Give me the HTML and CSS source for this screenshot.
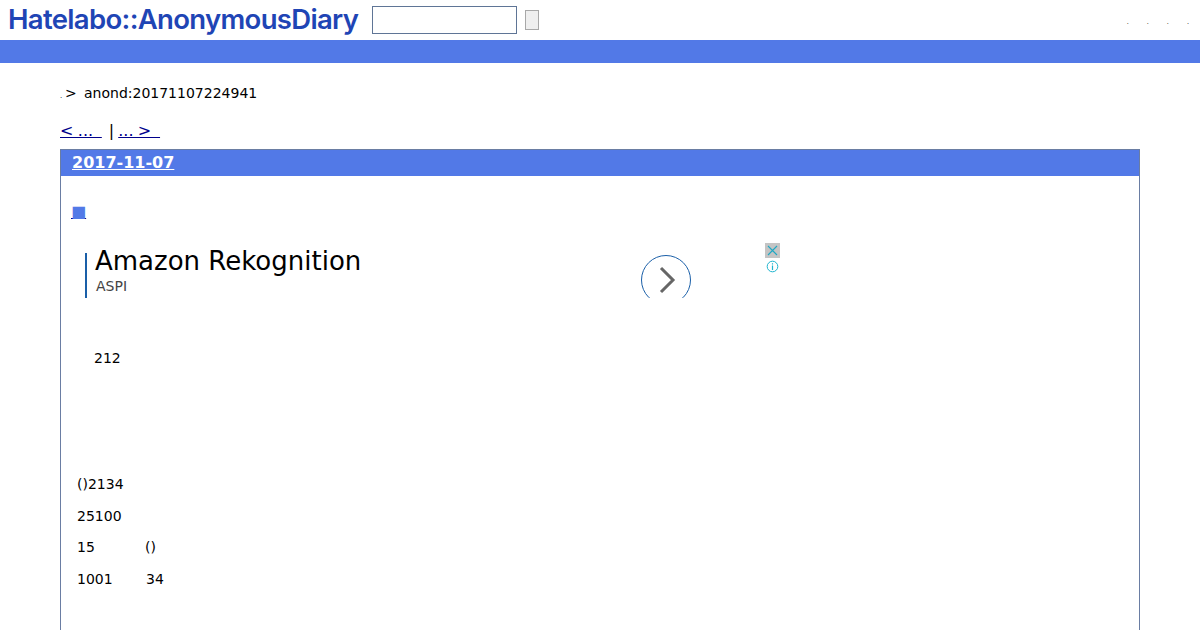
FILE: index.html
```html
<!DOCTYPE html>
<html lang="ja">
<head>
<meta charset="utf-8">
<title>anond:20171107224941</title>
<link rel="stylesheet" href="styles.css">
</head>
<body>
<header class="top">
  <a class="logo" href="#">Hatelabo::AnonymousDiary</a>
  <form class="search">
    <input class="search-input" type="text">
    <button class="search-btn" type="button"></button>
  </form>
  <nav class="top-links">
    <a href="#">.</a><a href="#">.</a><a href="#">.</a><a href="#">.</a>
  </nav>
</header>
<div class="bar"></div>
<main class="page">
  <p class="crumb"><span class="crumb-dot">.</span><span class="crumb-gt">&gt;</span><span>anond:20171107224941</span></p>
  <p class="pager"><a href="#">&lt; ... &nbsp;</a><span class="pager-sep">|</span><a href="#">... &gt; &nbsp;</a></p>
  <section class="day">
    <h2 class="day-title"><a href="#">2017-11-07</a></h2>
    <div class="day-body">
      <h3 class="entry-mark"><a href="#">■</a></h3>
      <div class="ad">
        <div class="ad-text">
          <div class="ad-title">Amazon Rekognition</div>
          <div class="ad-sub">ASPI</div>
        </div>
        <div class="ad-arrow-clip">
          <svg class="ad-arrow" width="52" height="52" viewBox="0 0 52 52">
            <circle cx="26" cy="26" r="24.5" fill="none" stroke="#1a5fa8" stroke-width="1"/>
            <path d="M21 14 L33 26 L21 38" fill="none" stroke="#666" stroke-width="3"/>
          </svg>
        </div>
        <div class="ad-badges">
          <svg class="ad-close" width="15" height="15" viewBox="0 0 15 15">
            <path d="M3 3 L12 12 M12 3 L3 12" stroke="#1ea8c4" stroke-width="1.1"/>
          </svg>
          <svg class="ad-info" width="13" height="13" viewBox="0 0 13 13">
            <circle cx="6.5" cy="6.5" r="5.3" fill="none" stroke="#1fb5cf" stroke-width="1"/>
            <path d="M6.5 5.6 V10 M6.5 3.2 V4.4" stroke="#1fb5cf" stroke-width="1.2"/>
          </svg>
        </div>
      </div>
      <p class="line line-first"><span class="indent">212</span></p>
      <p class="line line-gap">()2134</p>
      <p class="line">25100</p>
      <p class="line"><span class="col">15</span><span>()</span></p>
      <p class="line"><span class="col">1001</span><span class="col2">34</span></p>
    </div>
  </section>
</main>
</body>
</html>
```
FILE: styles.css
```css
html, body {
  margin: 0;
  padding: 0;
  height: 630px;
  overflow: hidden;
  background: #fff;
  color: #000;
  font-family: "DejaVu Sans", sans-serif;
  font-size: 14px;
}
a { color: #00008b; }

.top {
  display: flex;
  align-items: center;
  height: 40px;
  padding: 0 8px;
}
.logo {
  font-family: "Inter", "Liberation Sans", sans-serif;
  font-weight: 600;
  font-size: 27.5px;
  letter-spacing: -0.67px;
  color: #1f45b5;
  text-decoration: none;
  width: 364px;
  padding-bottom: 2px;
  white-space: nowrap;
}
.search {
  display: flex;
  align-items: center;
  gap: 8px;
  margin: 0;
}
.search-input {
  box-sizing: border-box;
  width: 145px;
  height: 28px;
  margin: 0;
  padding: 0;
  border: 1px solid #5f7596;
  background: #fff;
}
.search-btn {
  box-sizing: border-box;
  width: 14px;
  height: 20px;
  margin: 0;
  padding: 0;
  border: 1px solid #a8a8a8;
  border-radius: 0;
  background: #efefef;
}
.top-links {
  display: flex;
  gap: 18px;
  margin-left: auto;
  padding-right: 3px;
  padding-top: 4px;
  font-size: 6.5px;
}
.top-links a {
  color: #000;
  text-decoration: none;
}

.bar {
  height: 23px;
  background: #5279e7;
}

.page {
  padding: 0 60px;
}
.crumb {
  display: flex;
  align-items: baseline;
  margin: 22px 0 0;
  line-height: 17px;
}
.crumb-dot { font-size: 7px; width: 5px; }
.crumb-gt { width: 19px; }

.pager {
  margin: 16px 0 0;
  font-size: 16px;
  line-height: 19px;
  word-spacing: -0.7px;
}
.pager-sep { margin: 0 4px 0 7px; }

.day {
  box-sizing: border-box;
  margin-top: 9px;
  height: 600px;
  border: 1px solid #6a7da3;
}
.day-title {
  margin: 0;
  padding: 0 11px;
  height: 26px;
  line-height: 26px;
  font-size: 16px;
  font-weight: 700;
  background: #5279e7;
}
.day-title a { color: #fff; }
.day-body {
  padding: 0 16px;
}
.entry-mark {
  margin: 26px 0 0 -6px;
  font-size: 16px;
  line-height: 19px;
  font-weight: 400;
}
.entry-mark a { color: #5279e7; text-decoration-color: #00008b; }

.ad {
  position: relative;
  box-sizing: border-box;
  display: flex;
  width: 695px;
  height: 45px;
  margin: 32px 0 0 8px;
}
.ad-text {
  box-sizing: border-box;
  width: 555px;
  height: 45px;
  border-left: 2px solid #1a5fa8;
  padding-left: 8px;
}
.ad-title {
  font-size: 26px;
  line-height: 30px;
  margin-top: -7px;
}
.ad-sub {
  font-size: 14px;
  line-height: 16px;
  margin-top: 2px;
  padding-left: 1px;
  color: #444;
}
.ad-arrow-clip {
  flex: none;
  width: 52px;
  height: 44px;
  margin-top: 1px;
  overflow: hidden;
}
.ad-arrow { display: block; }
.ad-badges {
  position: absolute;
  top: -10px;
  right: 0;
  display: flex;
  flex-direction: column;
  align-items: center;
  gap: 2px;
}
.ad-close { background: #c4c4c4; display: block; }
.ad-info { display: block; }

.line {
  margin: 0;
  line-height: 17px;
  padding-top: 14.6px;
}
.line-first { margin-top: 52px; padding-top: 0; }
.line-gap { margin-top: 109px; padding-top: 0; }
.indent { padding-left: 17px; }
.col { display: inline-block; width: 68px; }
.col2 { display: inline-block; padding-left: 1px; }
```
